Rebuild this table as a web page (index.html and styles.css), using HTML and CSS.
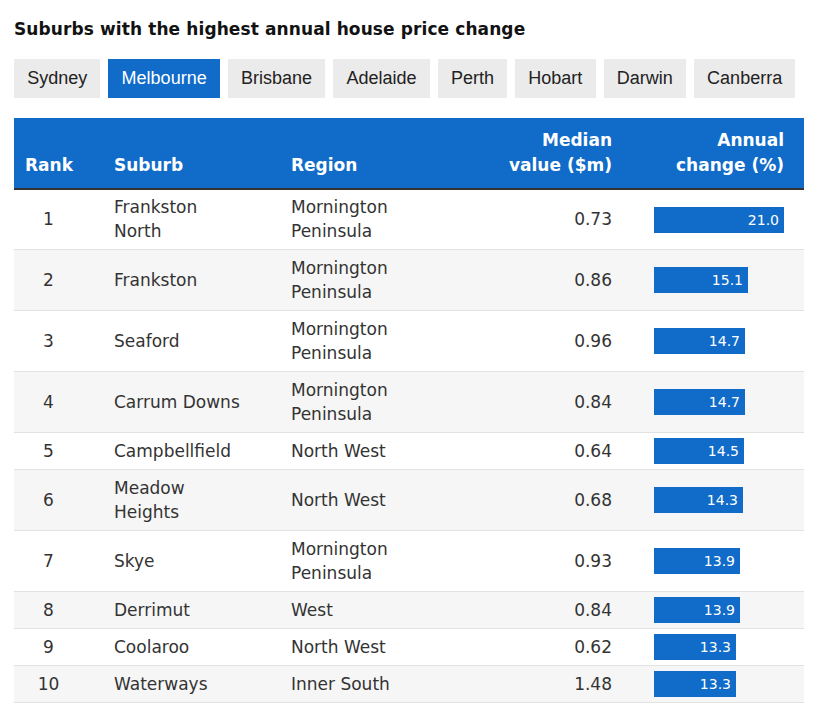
FILE: index.html
```html
<!DOCTYPE html>
<html>
<head>
<meta charset="utf-8">
<link rel="stylesheet" href="styles.css">
</head>
<body>
<div class="wrap">
  <h1 class="title">Suburbs with the highest annual house price change</h1>
  <div class="tabs">
    <button class="tab">Sydney</button>
    <button class="tab active">Melbourne</button>
    <button class="tab">Brisbane</button>
    <button class="tab">Adelaide</button>
    <button class="tab">Perth</button>
    <button class="tab">Hobart</button>
    <button class="tab">Darwin</button>
    <button class="tab">Canberra</button>
  </div>
  <table class="tbl">
    <colgroup>
      <col class="c1"><col class="c2"><col class="c3"><col class="c4"><col class="c5">
    </colgroup>
    <thead>
      <tr>
        <th class="rank">Rank</th>
        <th>Suburb</th>
        <th>Region</th>
        <th class="num">Median<br>value ($m)</th>
        <th class="chg">Annual<br>change (%)</th>
      </tr>
    </thead>
    <tbody>
      <tr class="first"><td class="rank">1</td><td>Frankston<br>North</td><td>Mornington<br>Peninsula</td><td class="num">0.73</td><td class="chg"><div class="bar" style="width:130px">21.0</div></td></tr>
      <tr><td class="rank">2</td><td>Frankston</td><td>Mornington<br>Peninsula</td><td class="num">0.86</td><td class="chg"><div class="bar" style="width:94px">15.1</div></td></tr>
      <tr><td class="rank">3</td><td>Seaford</td><td>Mornington<br>Peninsula</td><td class="num">0.96</td><td class="chg"><div class="bar" style="width:91px">14.7</div></td></tr>
      <tr><td class="rank">4</td><td>Carrum Downs</td><td>Mornington<br>Peninsula</td><td class="num">0.84</td><td class="chg"><div class="bar" style="width:91px">14.7</div></td></tr>
      <tr><td class="rank">5</td><td>Campbellfield</td><td>North West</td><td class="num">0.64</td><td class="chg"><div class="bar" style="width:90px">14.5</div></td></tr>
      <tr><td class="rank">6</td><td>Meadow<br>Heights</td><td>North West</td><td class="num">0.68</td><td class="chg"><div class="bar" style="width:89px">14.3</div></td></tr>
      <tr><td class="rank">7</td><td>Skye</td><td>Mornington<br>Peninsula</td><td class="num">0.93</td><td class="chg"><div class="bar" style="width:86px">13.9</div></td></tr>
      <tr><td class="rank">8</td><td>Derrimut</td><td>West</td><td class="num">0.84</td><td class="chg"><div class="bar" style="width:86px">13.9</div></td></tr>
      <tr><td class="rank">9</td><td>Coolaroo</td><td>North West</td><td class="num">0.62</td><td class="chg"><div class="bar" style="width:82px">13.3</div></td></tr>
      <tr><td class="rank">10</td><td>Waterways</td><td>Inner South</td><td class="num">1.48</td><td class="chg"><div class="bar" style="width:82px">13.3</div></td></tr>
    </tbody>
  </table>
</div>
</body>
</html>
```
FILE: styles.css
```css
html, body {
  margin: 0;
  padding: 0;
  background: #fff;
}
.wrap {
  padding: 17px 14px 0 14px;
  font-family: "DejaVu Sans", sans-serif;
  color: #333;
}
.title {
  margin: 0;
  font-size: 17px;
  letter-spacing: 0.1px;
  line-height: 24px;
  font-weight: bold;
  color: #121212;
}
.tabs {
  display: flex;
  gap: 8px;
  margin-top: 18px;
}
.tab {
  border: 0;
  margin: 0;
  padding: 0 13.2px;
  height: 39px;
  background: #ebebeb;
  color: #222;
  font-family: "Liberation Sans", Arial, sans-serif;
  font-size: 18px;
  line-height: 39px;
}
.tab.active {
  background: #106bc9;
  color: #fff;
}
.tbl {
  margin-top: 20px;
  width: 790px;
  border-collapse: collapse;
  table-layout: fixed;
}
.c1 { width: 89px; }
.c2 { width: 177px; }
.c3 { width: 170px; }
.c4 { width: 173px; }
.c5 { width: 181px; }
.tbl th {
  background: #106bc9;
  color: #fff;
  font-size: 17px;
  font-weight: bold;
  line-height: 25px;
  text-align: left;
  vertical-align: bottom;
  padding: 10px 11px;
  border-bottom: 2px solid #333;
}
.tbl td {
  font-size: 17px;
  line-height: 24px;
  padding: 6px 11px;
  vertical-align: middle;
  border-bottom: 1px solid #e2e2e2;
  text-align: left;
}
.tbl tr.first td {
  padding-top: 5px;
}
.tbl tbody tr:nth-child(even) td {
  background: #f6f6f6;
}
.tbl .rank {
  text-align: center;
  padding-right: 31px;
}
.tbl .num {
  text-align: right;
}
.tbl td.chg {
  padding-top: 5px;
  padding-bottom: 5px;
}
.tbl .chg {
  text-align: right;
  padding-left: 31px;
  padding-right: 20px;
}
.bar {
  height: 26px;
  background: #106bc9;
  color: #fff;
  font-size: 14px;
  font-weight: normal;
  line-height: 26px;
  text-align: right;
  padding-right: 5px;
  box-sizing: border-box;
}
```
